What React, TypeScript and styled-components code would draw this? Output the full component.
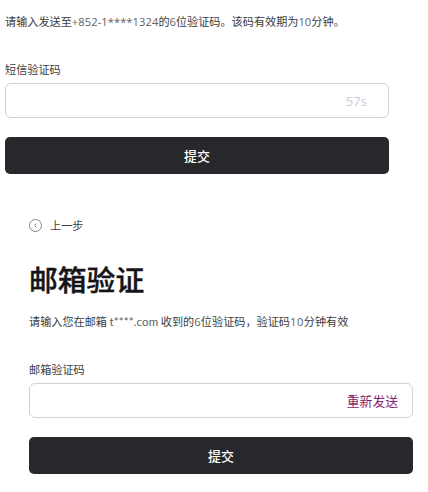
import React from "react";
import styled, { createGlobalStyle } from "styled-components";

const Global = createGlobalStyle`
  *{box-sizing:border-box}
  body{margin:0;background:#fff;color:#3c3d40;font-family:"Noto Sans CJK SC",sans-serif;font-size:11.15px;line-height:16px}
`;
const Page = styled.main`width:428px;height:492px;overflow:hidden;`;
const Section = styled.section<{ $left: number; $top: number }>`
  width:384px;margin-left:${p => p.$left}px;padding-top:${p => p.$top}px;
`;
const Note = styled.p`margin:0;height:16px;white-space:nowrap;`;
const Latin = styled.span<{ $spacing?: number }>`
  font-family:"Open Sans",sans-serif;font-weight:400;font-size:11.2px;line-height:0;color:#606166;
  letter-spacing:${p => p.$spacing ?? 0}px;
`;
const Address = styled(Latin)`font-family:Lato,sans-serif;font-size:11.5px;`;
const Label = styled.label`display:block;margin-top:32px;height:16px;`;
const Field = styled.div`
  height:35px;margin-top:6px;border:1px solid #d2d2d5;border-radius:6px;
  display:flex;align-items:center;justify-content:flex-end;
`;
const Timer = styled.span`color:#cbcbd1;font:13px/18px "Open Sans",sans-serif;letter-spacing:.1px;margin-right:21px;`;
const Resend = styled.button`
  border:0;background:none;padding:0;margin-right:14px;color:#86236f;font:12.8px "Noto Sans CJK SC",sans-serif;
`;
const Submit = styled.button`
  display:block;width:100%;height:37px;margin-top:19px;border:0;border-radius:5px;background:#27282c;color:#fff;
  font:500 13px "Noto Sans CJK SC",sans-serif;padding:0 0 1px;
`;
const Back = styled.div`display:flex;align-items:center;gap:7px;height:16px;`;
const Title = styled.h1`
  margin:26px 0 14px;font:500 28.8px/40px "Noto Sans CJK SC",sans-serif;color:#151517;
  -webkit-text-stroke:.4px #151517;
`;

export default function App() {
  return (
    <Page>
      <Global />
      <Section $left={5} $top={13}>
        <Note>请输入发送至<Latin $spacing={0.05}>+852-1****1324</Latin>的<Latin>6</Latin>位验证码。该码有效期为<Latin>10</Latin>分钟。</Note>
        <Label>短信验证码</Label>
        <Field><Timer>57s</Timer></Field>
        <Submit>提交</Submit>
      </Section>
      <Section $left={29} $top={43}>
        <Back>
          <svg width="14" height="14" viewBox="0 0 14 14" fill="none" stroke="#85868d"><circle cx="6.5" cy="7.5" r="6" /><path d="M7.4 5.5 5.4 7.5 7.4 9.5" /></svg>
          上一步
        </Back>
        <Title>邮箱验证</Title>
        <Note>请输入您在邮箱 <Address $spacing={0.12}>t****.com</Address> 收到的<Latin $spacing={0.2}>6</Latin>位验证码，验证码<Latin $spacing={0.5}>10</Latin>分钟有效</Note>
        <Label>邮箱验证码</Label>
        <Field><Resend>重新发送</Resend></Field>
        <Submit>提交</Submit>
      </Section>
    </Page>
  );
}
